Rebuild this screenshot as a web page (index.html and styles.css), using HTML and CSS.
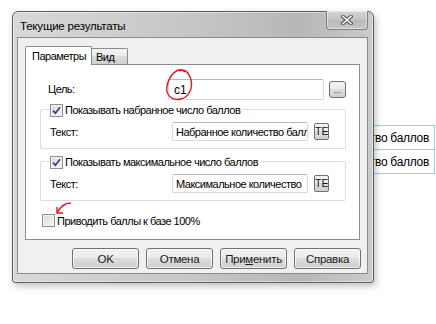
FILE: index.html
```html
<!DOCTYPE html>
<html lang="ru">
<head>
    <meta charset="UTF-8">
    <title>Текущие результаты</title>
    <link rel="stylesheet" href="styles.css">
</head>
<body>
<div class="desk">
    <div class="behind">
        <div class="behind-cell">Набранное количество баллов</div>
        <div class="behind-cell">Максимальное количество баллов</div>
    </div>

    <div class="window">
        <div class="titlebar">
            <span class="title">Текущие результаты</span>
            <div class="close">
                <svg width="12" height="10" viewBox="0 0 12 10">
                    <path d="M2 1.5 L10 8.5 M10 1.5 L2 8.5" stroke="#4a4a4a" stroke-width="3.6" stroke-linecap="square"/>
                    <path d="M2 1.5 L10 8.5 M10 1.5 L2 8.5" stroke="#fff" stroke-width="1.6" stroke-linecap="square"/>
                </svg>
            </div>
        </div>
        <div class="client">
            <div class="tabs">
                <div class="tab active">Параметры</div>
                <div class="tab">Вид</div>
            </div>
            <div class="page">
                <div class="row goal">
                    <span class="lbl">Цель:</span>
                    <div class="input goal-input">c1</div>
                    <div class="dots">...</div>
                </div>

                <div class="group">
                    <div class="legend">
                        <span class="check">
                            <svg width="9" height="9" viewBox="0 0 9 9"><path d="M1 4.6 L3.4 7.2 L8 1.2" fill="none" stroke="#2f4384" stroke-width="1.7"/></svg>
                        </span>
                        <span>Показывать набранное число баллов</span>
                    </div>
                    <div class="row text-row">
                        <span class="lbl">Текст:</span>
                        <div class="input text-input">Набранное количество балл</div>
                        <div class="te">TE</div>
                    </div>
                </div>

                <div class="group second">
                    <div class="legend">
                        <span class="check">
                            <svg width="9" height="9" viewBox="0 0 9 9"><path d="M1 4.6 L3.4 7.2 L8 1.2" fill="none" stroke="#2f4384" stroke-width="1.7"/></svg>
                        </span>
                        <span>Показывать максимальное число баллов</span>
                    </div>
                    <div class="row text-row">
                        <span class="lbl">Текст:</span>
                        <div class="input text-input">Максимальное количество</div>
                        <div class="te">TE</div>
                    </div>
                </div>

                <div class="row norm">
                    <span class="check"></span>
                    <span>Приводить баллы к базе 100%</span>
                </div>
            </div>
            <div class="buttons">
                <div class="btn">OK</div>
                <div class="btn">Отмена</div>
                <div class="btn">При<u>м</u>енить</div>
                <div class="btn">Справка</div>
            </div>
        </div>
    </div>

    <!-- red pen marks drawn over the screenshot -->
    <svg class="marks" width="436" height="324" viewBox="0 0 436 324">
        <path d="M185 72 C178 65 169 76 167 86 C165 96 173 101 181 99 C189 97 193 88 191 80 C189 72 184 68 179 71" fill="none" stroke="#e8141b" stroke-width="1.4"/>
        <path d="M71 203 C65 203 60 207 57 213 M57 207 L57 213 L63 213" fill="none" stroke="#e8141b" stroke-width="1.4"/>
    </svg>
</div>
</body>
</html>
```

FILE: styles.css
```css
* {
    box-sizing: border-box;
}
body {
    margin: 0;
    background-color: #fff;
    font-family: 'Liberation Sans', Arial, sans-serif;
    font-size: 11px;
    letter-spacing: -0.5px;
    color: #000;
}
.desk {
    position: relative;
    width: 436px;
    height: 324px;
    overflow: hidden;
}
.behind {
    position: absolute;
    left: 372px;
    top: 126px;
    width: 63px;
}
.behind-cell {
    height: 25px;
    margin-top: -1px;
    border: 1px solid #9ccaf0;
    display: flex;
    justify-content: flex-end;
    align-items: center;
    padding-right: 5px;
    white-space: nowrap;
    overflow: hidden;
    font-size: 12px;
    letter-spacing: -0.3px;
}
.window {
    position: absolute;
    left: 12px;
    top: 11px;
    width: 362px;
    height: 272px;
    border: 1px solid #5e5e5e;
    border-radius: 6px 6px 3px 3px;
    background: linear-gradient(to right, #d8d8d8, #c6c6c6 50%, #b7b7b7 80%, #cbcbcb);
    box-shadow: 2px 3px 7px rgba(0, 0, 0, 0.25), inset 0 0 0 1px rgba(255, 255, 255, 0.45);
    display: flex;
    flex-direction: column;
    padding: 0 5px 8px 4px;
}
.titlebar {
    height: 25px;
    display: flex;
    align-items: center;
    padding-left: 3px;
    position: relative;
}
.title {
    font-size: 11.5px;
    letter-spacing: -0.2px;
    padding-top: 2px;
}
.close {
    position: absolute;
    right: 0;
    top: -1px;
    width: 42px;
    height: 19px;
    border: 1px solid #7c7c7c;
    border-top: none;
    border-radius: 0 0 4px 4px;
    background: linear-gradient(#d4d4d4, #c4c4c4 50%, #b9b9b9 50%, #c6c6c6);
    box-shadow: inset 0 0 0 1px rgba(255, 255, 255, 0.5);
    display: flex;
    align-items: center;
    justify-content: center;
}
.client {
    flex: 1;
    background-color: #f0f0f0;
    border: 1px solid #8a8a8a;
    padding: 8px 7px 0 7px;
    display: flex;
    flex-direction: column;
}
.tabs {
    display: flex;
    align-items: flex-end;
    height: 18px;
}
.tab {
    height: 16px;
    width: 36px;
    border: 1px solid #898c95;
    border-bottom: none;
    border-left: none;
    border-radius: 0 2px 0 0;
    background: linear-gradient(#f3f3f3, #ebebeb 45%, #dddddd 50%, #cfcfcf);
    padding: 2px 0 0 4px;
}
.tab.active {
    height: 19px;
    width: 67px;
    margin-bottom: -1px;
    border-left: 1px solid #898c95;
    border-radius: 2px 2px 0 0;
    background: #fff;
    padding: 3px 0 0 6px;
    position: relative;
}
.page {
    height: 176px;
    border: 1px solid #898c95;
    background-color: #fff;
}
.row {
    display: flex;
    align-items: center;
}
.lbl {
    flex: none;
}
.input {
    border: 1px solid #d5d8de;
    border-top-color: #b5b8be;
    border-radius: 2px;
    background: #fff;
    white-space: nowrap;
    overflow: hidden;
    padding-left: 3px;
    display: flex;
    align-items: center;
}
.goal {
    height: 21px;
    margin-top: 14px;
    padding-left: 22px;
}
.goal .lbl {
    width: 120px;
    padding-bottom: 2px;
}
.goal-input {
    width: 156px;
    height: 21px;
    font-size: 12px;
    letter-spacing: 0;
    padding-left: 5px;
}
.dots {
    width: 17px;
    height: 17px;
    margin-left: 5px;
    border: 1px solid #707070;
    border-radius: 3px;
    background: linear-gradient(#f3f3f3, #ebebeb 45%, #dddddd 50%, #d0d0d0);
    font-size: 9px;
    letter-spacing: 0;
    line-height: 16px;
    text-align: center;
    color: #333;
}
.group {
    width: 306px;
    height: 40px;
    margin: 9px 0 0 14px;
    border: 1px solid #d5dfe5;
    border-radius: 2px;
}
.group.second {
    margin-top: 12px;
}
.legend {
    display: flex;
    align-items: center;
    width: fit-content;
    height: 14px;
    margin: -7px 0 0 9px;
    padding-right: 3px;
    background: #fff;
    gap: 2px;
}
.check {
    width: 13px;
    height: 13px;
    border: 1px solid #8e8f8f;
    background: linear-gradient(135deg, #dcdcdc, #f6f6f6);
    box-shadow: inset 0 0 0 1px #f4f4f4;
    display: flex;
    align-items: center;
    justify-content: center;
    flex: none;
}
.text-row {
    margin-top: 5px;
    padding-left: 9px;
}
.text-row .lbl {
    width: 122px;
}
.text-input {
    width: 136px;
    height: 19px;
}
.te {
    width: 15px;
    height: 17px;
    margin-left: 6px;
    border: 1px solid #707070;
    border-radius: 2px;
    background: linear-gradient(#f3f3f3, #ebebeb 45%, #dddddd 50%, #d0d0d0);
    font-size: 10.5px;
    line-height: 15px;
    text-align: center;
    letter-spacing: 0;
    color: #111;
}
.norm {
    height: 13px;
    margin: 13px 0 0 16px;
    gap: 2px;
}
.buttons {
    display: flex;
    justify-content: flex-end;
    gap: 7px;
    margin: 8px -1px 0 0;
}
.btn {
    width: 67px;
    height: 21px;
    border: 1px solid #707070;
    border-radius: 3px;
    background: linear-gradient(#f2f2f2, #ebebeb 45%, #dddddd 50%, #cfcfcf);
    box-shadow: inset 0 0 0 1px rgba(255, 255, 255, 0.7);
    display: flex;
    align-items: center;
    justify-content: center;
    font-size: 11.5px;
    letter-spacing: -0.3px;
    color: #1a1a1a;
}
.marks {
    position: absolute;
    left: 0;
    top: 0;
    pointer-events: none;
}
```
